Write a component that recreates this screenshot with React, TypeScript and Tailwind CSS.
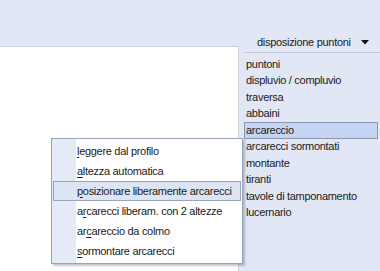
const ITEMS = [
  "puntoni",
  "displuvio / compluvio",
  "traversa",
  "abbaini",
  "arcareccio",
  "arcarecci sormontati",
  "montante",
  "tiranti",
  "tavole di tamponamento",
  "lucernario",
];

// [before, key, after]
const MENU: [string, string, string][] = [
  ["", "l", "eggere dal profilo"],
  ["", "a", "ltezza automatica"],
  ["", "p", "osizionare liberamente arcarecci"],
  ["a", "r", "carecci liberam. con 2 altezze"],
  ["ar", "c", "areccio da colmo"],
  ["", "s", "ormontare arcarecci"],
];

export default function App() {
  return (
    <div
      className="relative w-[380px] h-[271px] overflow-hidden bg-[#e1e7f4] text-[#1b1b1b] flex whitespace-nowrap tracking-[-0.3px]"
      style={{ fontFamily: '"Liberation Sans", Arial, sans-serif' }}
    >
      {/* white work area */}
      <div className="mt-[46px] w-[239px] h-[225px] bg-white border-t border-r border-[#c9d0de] shrink-0" />

      {/* right side list */}
      <div className="flex-1 ml-[5px] flex flex-col text-[11px]">
        <div className="mt-[33px] h-[20px] flex items-center border-b border-[#c3cad8]">
          <span className="ml-[13px] flex-1 leading-none">disposizione puntoni</span>
          <svg width="8" height="5" viewBox="0 0 8 5" className="mr-[11px]">
            <path d="M0 0 H8 L4 4.5 Z" fill="#111" />
          </svg>
        </div>
        <div className="mt-[3px] flex flex-col">
          {ITEMS.map((t) => (
            <div
              key={t}
              className={
                "h-[16.5px] flex items-center pl-[1px] leading-none " +
                (t === "arcareccio" ? "bg-[#c6d4f3] border border-[#8d96ab] mr-[2px]" : "border border-transparent")
              }
            >
              {t}
            </div>
          ))}
        </div>
      </div>

      {/* context menu */}
      <div className="absolute left-[51px] top-[138px] w-[192px] h-[126px] bg-white border border-[#97a2c0] shadow-[2px_2px_2px_rgba(80,90,120,0.35)] flex text-[11px]">
        <div className="w-[24px] bg-[#e4eaf6] shrink-0" />
        <div className="flex-1 flex flex-col pt-[2px]">
          {MENU.map(([a, k, b], i) => (
            <div key={i} className="h-[20px] relative flex items-center pl-[1px] leading-none">
              {i === 2 && (
                <div className="absolute left-[-23px] right-[1px] top-0 bottom-0 bg-[#dde5f4] border border-[#9aa3b8]" />
              )}
              <span className="relative">
                {a}
                <span className="underline underline-offset-2">{k}</span>
                {b}
              </span>
            </div>
          ))}
        </div>
      </div>
    </div>
  );
}
